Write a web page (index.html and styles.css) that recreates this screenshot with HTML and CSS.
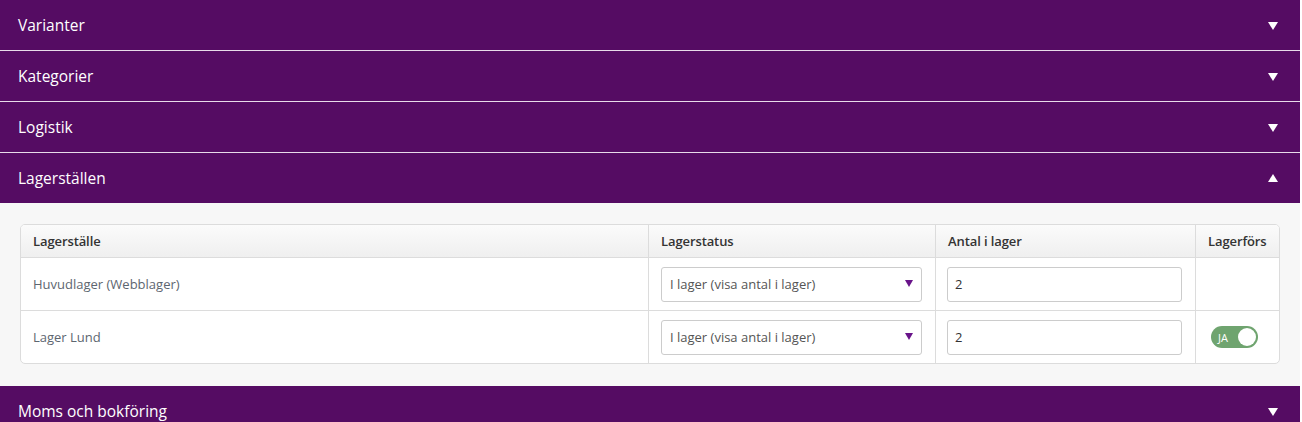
FILE: index.html
```html
<!DOCTYPE html>
<html lang="sv">
<head>
<meta charset="utf-8">
<title>Produkt</title>
<link rel="stylesheet" href="styles.css">
</head>
<body>
<div class="page">
  <div class="acc-head"><span>Varianter</span><span class="tri down"></span></div>
  <div class="acc-head"><span>Kategorier</span><span class="tri down"></span></div>
  <div class="acc-head"><span>Logistik</span><span class="tri down"></span></div>
  <div class="acc-head open"><span>Lagerställen</span><span class="tri up"></span></div>
  <div class="acc-body">
    <div class="tbl">
      <div class="cell th">Lagerställe</div>
      <div class="cell th">Lagerstatus</div>
      <div class="cell th">Antal i lager</div>
      <div class="cell th">Lagerförs</div>

      <div class="cell td name">Huvudlager (Webblager)</div>
      <div class="cell td"><div class="select"><span>I lager (visa antal i lager)</span><span class="sel-arrow"></span></div></div>
      <div class="cell td"><div class="input">2</div></div>
      <div class="cell td"></div>

      <div class="cell td name last">Lager Lund</div>
      <div class="cell td last"><div class="select"><span>I lager (visa antal i lager)</span><span class="sel-arrow"></span></div></div>
      <div class="cell td last"><div class="input">2</div></div>
      <div class="cell td last"><div class="toggle"><span class="tg-label">JA</span><span class="knob"></span></div></div>
    </div>
  </div>
  <div class="acc-head"><span>Moms och bokföring</span><span class="tri down"></span></div>
</div>
</body>
</html>
```
FILE: styles.css
```css
* { box-sizing: border-box; }
html, body { margin: 0; padding: 0; background: #fff; }
body { font-family: "Open Sans", "Liberation Sans", sans-serif; }
.page { width: 1300px; }
.acc-head {
  height: 51px;
  background: #550c63;
  border-bottom: 1px solid #e8dcea;
  color: #fff;
  font-size: 15.5px;
  display: flex;
  align-items: center;
  justify-content: space-between;
  padding: 0 22px 1px 18px;
}
.acc-head.open { border-bottom: none; height: 50px; padding-bottom: 0; }
.tri { width: 0; height: 0; border-left: 5.5px solid transparent; border-right: 5.5px solid transparent; }
.tri.down { border-top: 8px solid #fff; margin-top: 2px; }
.tri.up { border-bottom: 8px solid #fff; }
.acc-body {
  background: #f7f7f7;
  padding: 21px 20px 22px 20px;
}
.tbl {
  display: grid;
  grid-template-columns: 628px 287px 260px 1fr;
  background: #fff;
  border: 1px solid #dcdcdc;
  border-radius: 5px;
  overflow: hidden;
}
.cell {
  border-right: 1px solid #dcdcdc;
  border-bottom: 1px solid #dcdcdc;
  display: flex;
  align-items: center;
  padding: 0 12px;
  font-size: 13px;
}
.cell:nth-child(4n) { border-right: none; }
.th {
  height: 33px;
  background: linear-gradient(#fbfbfb, #efefef);
  color: #333;
  font-weight: 600;
  padding-bottom: 1px;
  letter-spacing: -0.1px;
}
.td { height: 53px; color: #555; }
.td.last { border-bottom: none; height: 52px; }
.name { color: #5d6670; }
.select {
  width: 261px;
  height: 35px;
  border: 1px solid #cccccc;
  border-radius: 3px;
  display: flex;
  align-items: center;
  justify-content: space-between;
  padding: 0 8px 1px 8px;
  color: #555;
  font-size: 13px;
  background: #fff;
}
.sel-arrow {
  width: 0; height: 0;
  border-left: 4px solid transparent;
  border-right: 4px solid transparent;
  border-top: 7px solid #69148a;
}
.input {
  width: 235px;
  height: 35px;
  margin-left: -1px;
  border: 1px solid #cccccc;
  border-radius: 3px;
  display: flex;
  align-items: center;
  padding: 0 8px 1px 7px;
  font-size: 13px;
  color: #333;
}
.td:nth-child(4n) { padding-left: 15px; }
.toggle {
  width: 47px;
  height: 22px;
  border-radius: 11px;
  background: #6fa46f;
  display: flex;
  align-items: center;
  justify-content: space-between;
  padding: 0 2px 0 7px;
}
.tg-label { color: #fff; font-size: 11px; line-height: 1; }
.knob { width: 18px; height: 18px; border-radius: 50%; background: #fff; }
```
